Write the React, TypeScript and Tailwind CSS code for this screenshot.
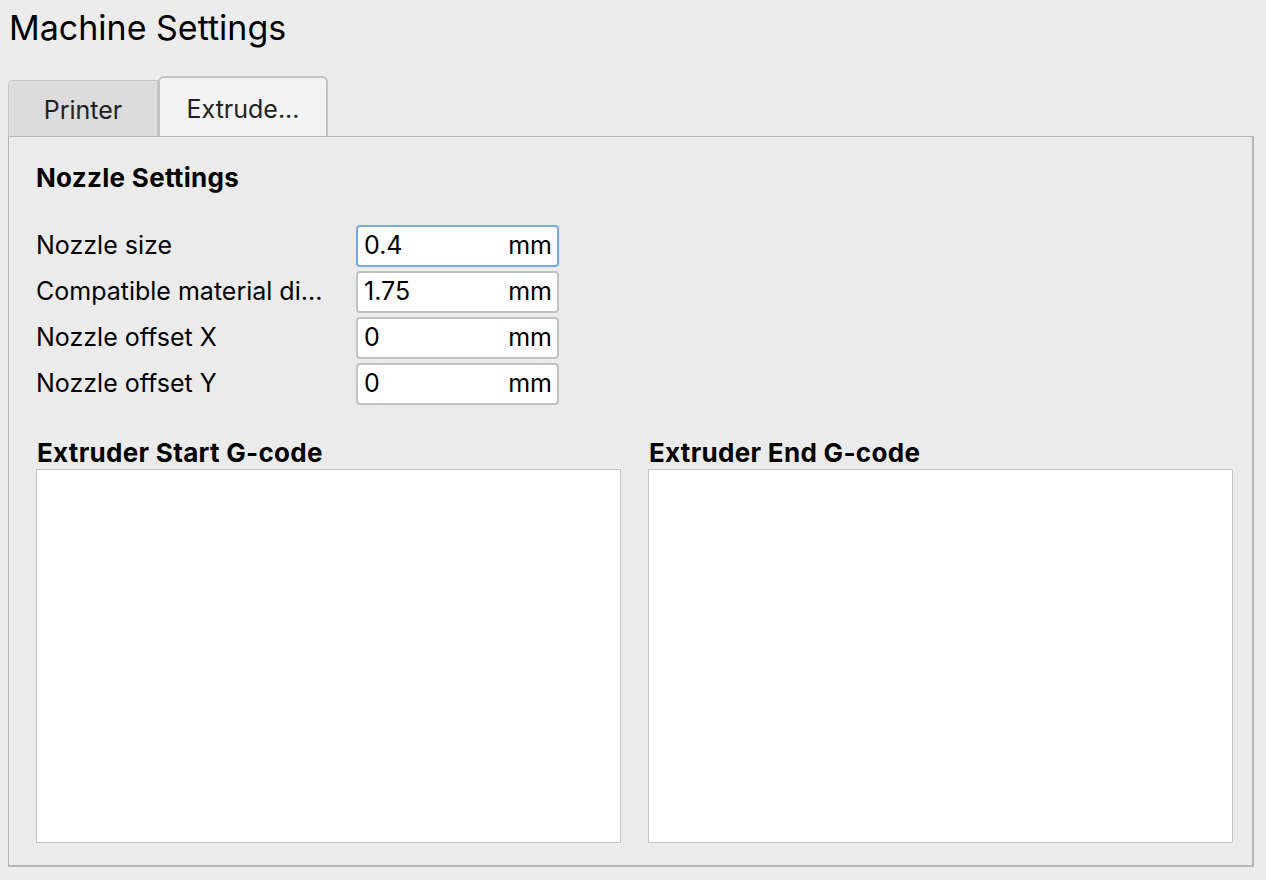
import React from 'react';

const FONT = { fontFamily: 'Inter, "Liberation Sans", Arial, sans-serif' };

const ROWS = [
  { label: 'Nozzle size', value: '0.4', focused: true },
  { label: 'Compatible material di...', value: '1.75' },
  { label: 'Nozzle offset X', value: '0' },
  { label: 'Nozzle offset Y', value: '0' },
];

const UnitField: React.FC<{ value: string; focused?: boolean }> = ({ value, focused }) => (
  <div
    className={
      focused
        ? 'w-[203px] h-[42px] rounded-[4px] bg-white border-2 border-[#76a9e6] flex items-center justify-between pl-[6px] pr-[5px] text-[25px] text-black'
        : 'w-[203px] h-[42px] rounded-[4px] bg-white border-2 border-[#c2c2c2] flex items-center justify-between pl-[6px] pr-[5px] text-[25px] text-black'
    }
  >
    <span>{value}</span>
    <span>mm</span>
  </div>
);

const App: React.FC = () => {
  return (
    <div className="w-[1266px] h-[880px] bg-[#ececec] overflow-hidden" style={FONT}>
      <h1 className="pl-[9px] pt-[6px] h-[76px] text-[34px] leading-[44px] text-black">Machine Settings</h1>

      {/* tabs */}
      <div className="flex items-end pl-2 h-[60px]">
        <div className="w-[150px] h-[56px] bg-[#dcdcdc] border border-b-0 border-[#c6c6c6] rounded-tl-[5px] flex items-center justify-center text-[25px] text-[#222] pt-[5px]">
          Printer
        </div>
        <div className="w-[170px] h-[60px] bg-[#f3f3f3] border-2 border-b-0 border-[#c2c2c2] rounded-t-[6px] flex items-center justify-center text-[25px] text-[#222] pt-[5px]">
          Extrude...
        </div>
      </div>

      {/* panel */}
      <div className="ml-2 mr-3 h-[731px] border-2 border-t-[1px] border-l-[1px] border-[#b6b6b6] bg-[#ebebeb] pl-[27px] pr-[19px]">
        <h2 className="h-[88px] pt-[25px] text-[26px] leading-[32px] font-bold tracking-[0.3px] text-black">Nozzle Settings</h2>

        <div className="flex flex-col gap-[4px]">
          {ROWS.map(r => (
            <div key={r.label} className="flex items-center">
              <div className="w-[320px] whitespace-nowrap text-[25px] text-black">{r.label}</div>
              <UnitField value={r.value} focused={r.focused} />
            </div>
          ))}
        </div>

        <div className="grid grid-cols-2 gap-[27px] mt-[31px]">
          {['Extruder Start G-code', 'Extruder End G-code'].map(t => (
            <div key={t} className="flex flex-col">
              <div className="h-[33px] text-[26px] leading-[33px] font-bold tracking-[0.3px] text-black pl-[1px]">{t}</div>
              <div className="h-[374px] bg-white border-[1.5px] border-[#c4c4c4]" />
            </div>
          ))}
        </div>
      </div>
    </div>
  );
};

export default App;
